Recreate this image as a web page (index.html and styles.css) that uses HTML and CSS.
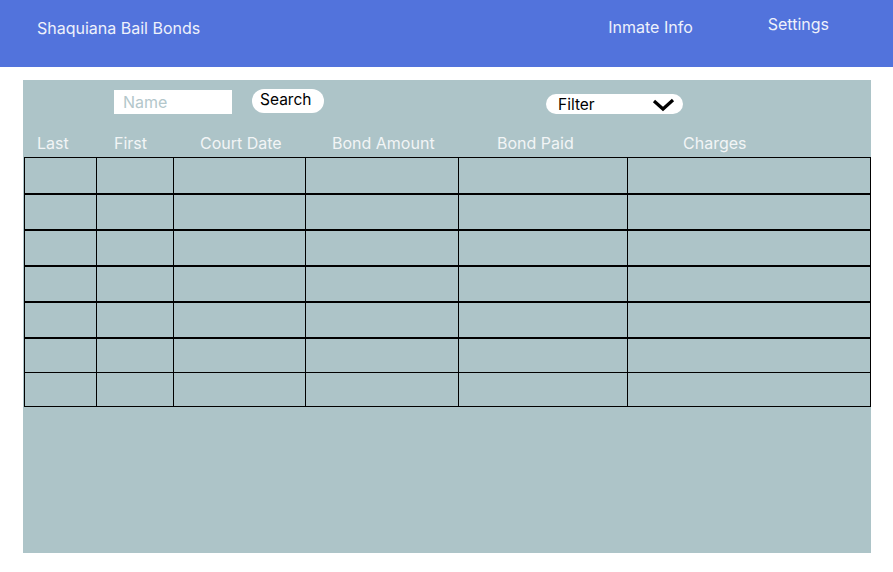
FILE: index.html
```html
<!DOCTYPE html>
<html>
<head>
<meta charset="utf-8">
<link rel="stylesheet" href="styles.css">
</head>
<body>
<header class="topbar">
  <div class="brand">Shaquiana Bail Bonds</div>
  <nav class="nav">
    <a class="nav-item nav-inmate">Inmate Info</a>
    <a class="nav-item nav-settings">Settings</a>
  </nav>
</header>
<main class="panel">
  <div class="toolbar">
    <div class="name-input">Name</div>
    <div class="search-btn">Search</div>
    <div class="filter">
      <span>Filter</span>
      <svg class="chev" width="24" height="14" viewBox="0 0 24 14"><path d="M2 3 L11 11 L21 2" fill="none" stroke="#000" stroke-width="3.2"/></svg>
    </div>
  </div>
  <div class="heads">
    <span class="h h-last">Last</span>
    <span class="h h-first">First</span>
    <span class="h h-court">Court Date</span>
    <span class="h h-amount">Bond Amount</span>
    <span class="h h-paid">Bond Paid</span>
    <span class="h h-charges">Charges</span>
  </div>
  <table class="grid">
    <colgroup><col class="c1"><col class="c2"><col class="c3"><col class="c4"><col class="c5"><col class="c6"></colgroup>
    <tr><td></td><td></td><td></td><td></td><td></td><td></td></tr>
    <tr><td></td><td></td><td></td><td></td><td></td><td></td></tr>
    <tr><td></td><td></td><td></td><td></td><td></td><td></td></tr>
    <tr><td></td><td></td><td></td><td></td><td></td><td></td></tr>
    <tr><td></td><td></td><td></td><td></td><td></td><td></td></tr>
    <tr><td></td><td></td><td></td><td></td><td></td><td></td></tr>
    <tr class="last"><td></td><td></td><td></td><td></td><td></td><td></td></tr>
  </table>
</main>
</body>
</html>
```
FILE: styles.css
```css
* { box-sizing: border-box; }
body {
  margin: 0;
  font-family: Inter, "Noto Sans", sans-serif;
  background: #fff;
}
.topbar {
  height: 67px;
  background: #5273dc;
  display: flex;
  align-items: flex-start;
  justify-content: space-between;
  color: #eef1fb;
  font-size: 16px;
}
.brand {
  margin: 18px 0 0 37px;
}
.nav {
  display: flex;
  align-items: flex-start;
  margin-right: 64px;
}
.nav-item { display: block; }
.nav-inmate { margin-top: 17px; margin-right: 75px; }
.nav-settings { margin-top: 14px; }
.panel {
  margin: 13px 0 0 23px;
  width: 848px;
  height: 473px;
  background: #adc4c8;
  padding-top: 9px;
}
.toolbar {
  display: flex;
  align-items: flex-start;
  height: 39px;
}
.name-input {
  margin: 1px 0 0 91px;
  width: 118px;
  height: 24px;
  background: #fff;
  color: #b3c7cb;
  font-size: 16px;
  padding: 2px 0 0 9px;
}
.search-btn {
  margin-left: 20px;
  width: 72px;
  height: 24px;
  background: #fff;
  border-radius: 12px;
  font-size: 15.5px;
  color: #000;
  padding: 1px 0 0 8px;
}
.filter {
  margin: 5px 0 0 222px;
  width: 137px;
  height: 20px;
  background: #fff;
  border-radius: 10px;
  font-size: 15.5px;
  color: #000;
  display: flex;
  align-items: center;
  justify-content: space-between;
  padding: 0 7px 0 12px;
}
.chev { margin-top: 1px; }
.heads {
  position: relative;
  height: 29px;
  color: #f2f5f6;
  font-size: 16px;
}
.h { position: absolute; top: 5px; }
.h-last { left: 14px; }
.h-first { left: 91px; }
.h-court { left: 177px; }
.h-amount { left: 309px; }
.h-paid { left: 474px; }
.h-charges { left: 660px; }
.grid {
  margin-left: 1px;
  border-collapse: collapse;
  width: 846px;
  table-layout: fixed;
}
.grid td {
  border: 1px solid #000;
  height: 36px;
  padding: 0;
}
.grid tr:nth-child(n+2) td { border-top-width: 2px; }
.grid tr:nth-child(6) td { height: 35px; }
.grid tr.last td { border-top-width: 1px; height: 34px; }
.c1 { width: 72px; }
.c2 { width: 77px; }
.c3 { width: 132px; }
.c4 { width: 153px; }
.c5 { width: 169px; }
.c6 { width: 243px; }
```
